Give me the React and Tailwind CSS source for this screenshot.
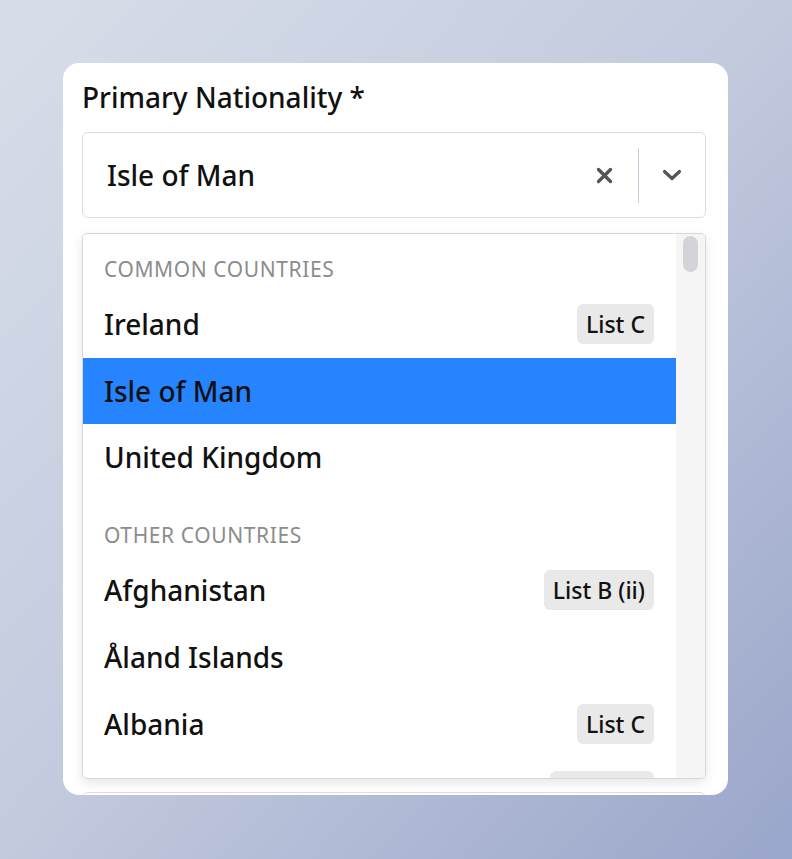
import React from "react";

const font = { fontFamily: "'Noto Sans', Lato, sans-serif" };

function Badge({ children }) {
  return (
    <span className="inline-flex h-[40px] items-center rounded-[6px] bg-[#e9e9e9] px-[9px] text-[23px] font-medium text-[#111]">
      {children}
    </span>
  );
}

function Option({ label, badge, selected, tall }) {
  return (
    <div
      className={
        "flex shrink-0 items-center justify-between pl-[21px] pr-[22px] text-[28px] font-medium " +
        (tall ? "h-[67px] " : "h-[66.5px] ") +
        (selected ? "bg-[#2684ff] text-[#111]" : "text-[#111]")
      }
    >
      <span>{label}</span>
      {badge ? <Badge>{badge}</Badge> : null}
    </div>
  );
}

function Heading({ children }) {
  return (
    <div className="flex h-[42px] shrink-0 items-center pl-[21px] text-[21px] tracking-[0.6px] uppercase text-[#8c8c8c]">
      {children}
    </div>
  );
}

export default function App() {
  return (
    <div
      className="min-h-[859px] w-full bg-linear-to-br from-[#d8dee9] via-[#c2cade] to-[#9aa6ca] pt-[63px]"
      style={font}
    >
      <div className="ml-[63px] h-[732px] w-[665px] overflow-hidden rounded-[16px] bg-white pl-[19px] pr-[22px] pt-[17px]">
        <div className="h-[34px] text-[28px] font-medium leading-[34px] text-[#111]">
          Primary Nationality *
        </div>
        <div className="mt-[18px] flex h-[86px] items-center rounded-[6px] border border-[#dcdcdc] bg-white">
          <div className="flex-1 pl-[24px] text-[28px] font-medium text-[#111]">Isle of Man</div>
          <div className="flex h-full items-center">
            <div className="flex w-[68px] items-center justify-center">
              <svg width="17" height="17" viewBox="0 0 17 17">
                <path d="M2.5 2.5 L14.5 14.5 M14.5 2.5 L2.5 14.5" stroke="#555" strokeWidth="3.4" strokeLinecap="round" />
              </svg>
            </div>
            <div className="h-[55px] w-px bg-[#c3cbdd]" />
            <div className="flex w-[66px] items-center justify-center">
              <svg width="22" height="14" viewBox="0 0 22 14">
                <path d="M3.5 3.5 L11 10.5 L18.5 3.5" stroke="#555" strokeWidth="3.2" fill="none" strokeLinecap="round" strokeLinejoin="round" />
              </svg>
            </div>
          </div>
        </div>
        <div className="mt-[15px] flex h-[546px] overflow-hidden rounded-[5px] border border-[#d8d8d8] bg-white shadow-[0_4px_11px_rgba(0,0,0,0.1)]">
          <div className="flex flex-1 flex-col overflow-hidden pt-[15px]">
            <Heading>Common Countries</Heading>
            <Option label="Ireland" badge="List C" />
            <Option label="Isle of Man" selected />
            <Option label="United Kingdom" />
            <div className="h-[24px] shrink-0" />
            <Heading>Other Countries</Heading>
            <Option label="Afghanistan" badge="List B (ii)" tall />
            <Option label="Åland Islands" tall />
            <Option label="Albania" badge="List C" tall />
            <Option label="Algeria" badge="List B (i)" tall />
          </div>
          <div className="w-[29px] shrink-0 bg-[#f5f5f5] pt-[2px]">
            <div className="ml-[7px] h-[36px] w-[15px] rounded-full bg-[#d4d4d8]" />
          </div>
        </div>
        <div className="mt-[13px] h-[60px] rounded-[6px] border border-[#dcdcdc] bg-white" />
      </div>
    </div>
  );
}
